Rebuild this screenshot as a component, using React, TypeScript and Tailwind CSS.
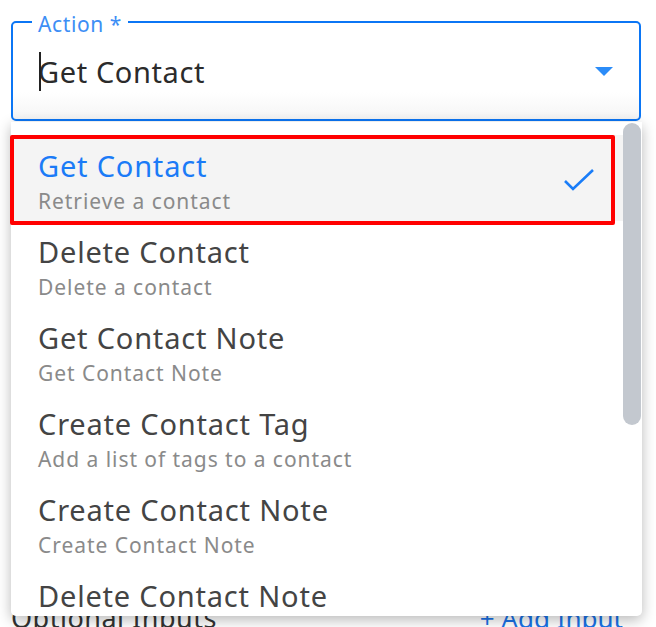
import React from 'react';

const actions = [
    { title: 'Get Contact', desc: 'Retrieve a contact' },
    { title: 'Delete Contact', desc: 'Delete a contact' },
    { title: 'Get Contact Note', desc: 'Get Contact Note' },
    { title: 'Create Contact Tag', desc: 'Add a list of tags to a contact' },
    { title: 'Create Contact Note', desc: 'Create Contact Note' },
    { title: 'Delete Contact Note', desc: 'Delete a contact note' },
];

export default function App() {
    const selected = 'Get Contact';

    return (
        <div className="relative w-[656px] h-[627px] overflow-hidden bg-white font-['Noto_Sans',sans-serif]">
            <div className="flex flex-col gap-[479px] pl-[11px] pr-[15px] pt-[21px]">
                {/* select field */}
                <div className="relative h-[100px] border-2 border-[#0b76f5] rounded-[5px] bg-[linear-gradient(to_bottom,#ffffff_72%,#f5f5f5)] pl-[25px] pt-[31px]">
                    <span className="absolute left-[19px] top-[-11px] bg-white px-[6px] text-[21px] leading-[24px] tracking-[0.6px] text-[#3d8ef5]">
                        Action *
                    </span>
                    <div className="text-[29px] leading-[36px] tracking-[0.6px] text-[#2b2b2b]">Get Contact</div>
                    <span className="absolute left-[26px] top-[29px] w-[2px] h-[39px] bg-[#222]" />
                    <svg className="absolute right-[26px] top-[44px]" width="18" height="9" viewBox="0 0 18 9">
                        <path d="M0 0 L18 0 L9 9 Z" fill="#2b8cf8" />
                    </svg>
                </div>

                <div className="flex items-center justify-between">
                    <span className="text-[27px] leading-[36px] tracking-[0.5px] text-[#333]">Optional Inputs</span>
                    <span className="text-[26px] leading-[36px] text-[#1a73e8] pr-[18px]">+ Add Input</span>
                </div>
            </div>

            {/* dropdown menu */}
            <div className="absolute left-[11px] top-[122px] w-[631px] h-[494px] bg-white rounded-b-[5px] shadow-[0_4px_14px_rgba(0,0,0,0.28)] overflow-hidden">
                <div className="pt-[13px] mr-[19px]">
                    {actions.map((a) => {
                        const isActive = a.title === selected;
                        return (
                            <div key={a.title}
                                className={`relative h-[86px] pl-[27px] pt-[13px] ${isActive ? 'bg-[#f4f4f4]' : ''}`}
                            >
                                <div className={`text-[29px] leading-[36px] tracking-[0.8px] ${isActive ? 'text-[#1b7bf7]' : 'text-[#444]'}`}>
                                    {a.title}
                                </div>
                                <div className="mt-[3px] text-[21px] leading-[28px] tracking-[0.95px] text-[#8a8a8a]">{a.desc}</div>
                                {isActive && (
                                    <svg className="absolute right-[28px] top-[32px]" width="32" height="25" viewBox="0 0 32 25" fill="none">
                                        <path d="M2 14 L10 22 L30 3" stroke="#1a7df8" strokeWidth="2.6" />
                                    </svg>
                                )}
                            </div>
                        );
                    })}
                </div>
                <div className="absolute right-[1px] top-[1px] w-[18px] h-[302px] rounded-full bg-[#c3c8cf]" />
            </div>

            {/* highlight box */}
            <div className="absolute left-[10px] top-[135px] w-[605px] h-[90px] border-4 border-[#ff0000] rounded-[2px]" />
        </div>
    );
}
